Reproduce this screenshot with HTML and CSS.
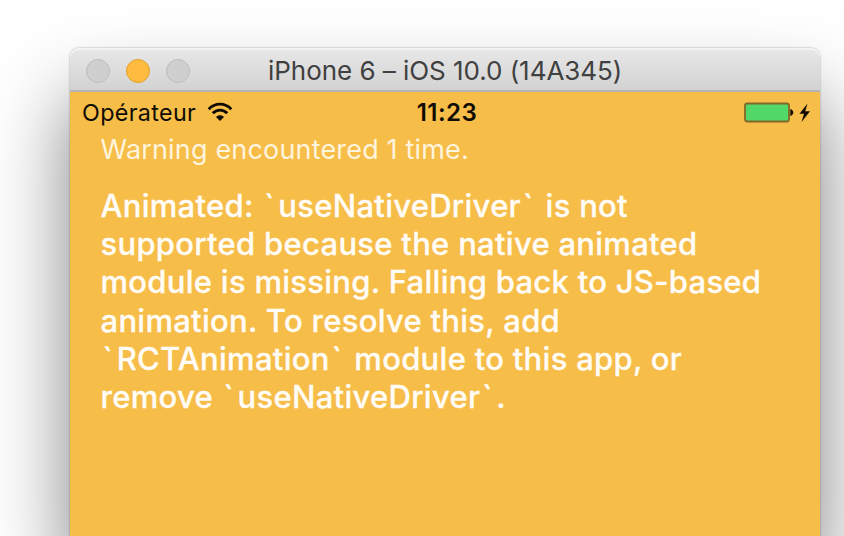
FILE: index.html
```html
<!DOCTYPE html>
<html lang="fr">
<head>
<meta charset="utf-8">
<title>iPhone 6 – iOS 10.0 (14A345)</title>
<link rel="stylesheet" href="styles.css">
</head>
<body>
<main class="window">
  <header class="titlebar">
    <div class="controls"><i class="light"></i><i class="light active"></i><i class="light"></i></div>
    <h1 class="title">iPhone 6 – iOS 10.0 (14A345)</h1>
  </header>
  <section class="screen">
    <div class="status">
      <div class="carrier">
        <span class="operator">Opérateur</span>
        <svg class="wifi" width="26" height="20" viewBox="0 0 26 20">
          <path d="M1.7 7.2C8 .4 18 .4 24.3 7.2" fill="none" stroke="#100c04" stroke-width="2.8"/>
          <path d="M5.8 11.3C9.8 7.1 16.2 7.1 20.2 11.3" fill="none" stroke="#100c04" stroke-width="2.8"/>
          <path d="M13 19L9 14.9C11.2 12.7 14.8 12.7 17 14.9Z" fill="#100c04"/>
        </svg>
      </div>
      <span class="time">11:23</span>
      <svg class="battery" width="68" height="22" viewBox="0 0 68 22">
        <rect x="1" y="1.5" width="44" height="18" rx="2.2" fill="#52d769" stroke="#826728" stroke-width="1.8"/>
        <path d="M46.3 7C50.3 8.2 50.3 12.8 46.3 14Z" fill="#100c04"/>
        <path d="M63.5 1.5L55.5 11.7H60L57.5 20L66 9.2H61.2Z" fill="#100c04"/>
      </svg>
    </div>
    <p class="count">Warning encountered 1 time.</p>
    <p class="message">
      <span class="line">Animated: <span class="tick">`</span>useNativeDriver<span class="tick">`</span> is not</span>
      <span class="line">supported because the native animated</span>
      <span class="line">module is missing. Falling back to JS-based</span>
      <span class="line">animation. To resolve this, add</span>
      <span class="line"><span class="tick">`</span>RCTAnimation<span class="tick">`</span> module to this app, or</span>
      <span class="line">remove <span class="tick">`</span>useNativeDriver<span class="tick">`</span>.</span>
    </p>
  </section>
</main>
</body>
</html>
```
FILE: styles.css
```css
* { box-sizing: border-box; margin: 0; }
body {
  height: 536px;
  padding: 48px 24px 0 70px;
  overflow: hidden;
  background: #fff;
  font-family: Inter, "Liberation Sans", sans-serif;
}
.window {
  width: 750px;
  height: 488px;
  border-radius: 9px 9px 0 0;
  box-shadow: 0 0 2px rgba(0,0,0,.4), 0 50px 80px rgba(0,0,0,.5);
}
.titlebar {
  display: grid;
  grid-template-columns: 182px 1fr;
  align-items: center;
  height: 44px;
  padding-left: 16px;
  border-radius: 9px 9px 0 0;
  border-bottom: 2px solid #b5b5b5;
  background: linear-gradient(#e8e8e8, #d3d3d3);
  box-shadow: inset 0 2px 0 #f3f3f3;
}
.controls { display: flex; gap: 16px; }
.light {
  width: 24px;
  height: 24px;
  border: 1.5px solid #bdbdbd;
  border-radius: 50%;
  background: #cfcfcf;
}
.light.active { border-color: #e4a02d; background: #fdbc40; }
.title {
  color: #404040;
  font-size: 26px;
  font-weight: 400;
  letter-spacing: -.04px;
  line-height: 46px;
  white-space: nowrap;
}
.screen { height: 444px; background: #f6bd49; }
.status {
  display: grid;
  grid-template-columns: 1fr auto 1fr;
  align-items: center;
  height: 41px;
  padding: 0 8px 0 12px;
  color: #100c04;
  font-size: 23.3px;
}
.carrier { display: flex; align-items: center; gap: 11px; letter-spacing: .35px; }
.wifi { margin-top: -2px; }
.time { font-size: 24px; font-weight: 600; letter-spacing: .5px; }
.battery { justify-self: end; }
.count {
  padding-left: 30.5px;
  color: #fff4dd;
  font-size: 27px;
  font-weight: 400;
  letter-spacing: .17px;
  line-height: 34px;
}
.message {
  padding: 20px 0 0 30.5px;
  color: #fffcf6;
  font-size: 31px;
  font-weight: 500;
  letter-spacing: .28px;
  -webkit-text-stroke: .3px #fffcf6;
}
.line { display: block; width: max-content; line-height: 38.2px; white-space: nowrap; }
.tick { padding: 0 3.6px 0 1.8px; }
```
